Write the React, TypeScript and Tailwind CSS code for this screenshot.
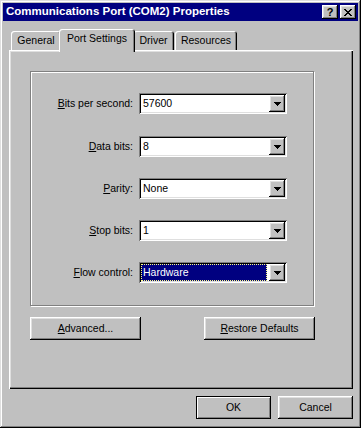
import type { ReactNode } from 'react'

// 콤보 드롭다운 화살표 (픽셀 삼각형)
function Arrow() {
  return (
    <svg width="7" height="4" viewBox="0 0 7 4" shapeRendering="crispEdges">
      <rect x="0" y="0" width="7" height="1" fill="#000" />
      <rect x="1" y="1" width="5" height="1" fill="#000" />
      <rect x="2" y="2" width="3" height="1" fill="#000" />
      <rect x="3" y="3" width="1" height="1" fill="#000" />
    </svg>
  )
}

function CloseGlyph() {
  const rows = ['##....##', '.##..##.', '..####..', '...##...', '..####..', '.##..##.', '##....##']
  return (
    <svg width="8" height="7" viewBox="0 0 8 7" shapeRendering="crispEdges">
      {rows.map((r, y) =>
        r.split('').map((c, x) => (c === '#' ? <rect key={`${x}-${y}`} x={x} y={y} width="1" height="1" fill="#000" /> : null))
      )}
    </svg>
  )
}

const raised =
  'shadow-[inset_-1px_-1px_0_#000,inset_1px_1px_0_#fff,inset_-2px_-2px_0_#808080,inset_2px_2px_0_#dfdfdf]'

function Combo({ value, selected }: { value: string; selected?: boolean }) {
  return (
    <div className="flex h-[21px] w-[148px] items-center bg-white p-[2px] shadow-[inset_1px_1px_0_#808080,inset_-1px_-1px_0_#fff,inset_2px_2px_0_#000,inset_-2px_-2px_0_#dfdfdf]">
      {selected ? (
        <div className="mr-[2px] flex h-[17px] flex-1 items-center border border-dotted border-[#ffff80] bg-[#000080] pl-[1px] text-white">
          {value}
        </div>
      ) : (
        <div className="flex-1 pl-[2px]">{value}</div>
      )}
      <div className={`flex h-[17px] w-[16px] items-center justify-center bg-[#c0c0c0] ${raised}`}>
        <Arrow />
      </div>
    </div>
  )
}

function Row({ label, value, selected, extra }: { label: ReactNode; value: string; selected?: boolean; extra?: string }) {
  return (
    <div className={`flex items-center ${extra ?? ''}`}>
      <div className="w-[102px] text-right">{label}</div>
      <div className="ml-[6px]">
        <Combo value={value} selected={selected} />
      </div>
    </div>
  )
}

function Button({ children, w, isDefault }: { children: ReactNode; w: string; isDefault?: boolean }) {
  return (
    <div
      className={`flex h-[23px] items-center justify-center bg-[#c0c0c0] ${w} ${
        isDefault
          ? 'border border-black shadow-[inset_1px_1px_0_#fff,inset_-1px_-1px_0_#808080]'
          : raised
      }`}
    >
      {children}
    </div>
  )
}

export default function App() {
  return (
    <div className="flex h-[428px] w-[361px] flex-col bg-[#c0c0c0] p-[3px] font-['Liberation_Sans',Arial,sans-serif] text-[10.5px] leading-none text-black shadow-[inset_-1px_-1px_0_#000,inset_1px_1px_0_#dfdfdf,inset_-2px_-2px_0_#808080,inset_2px_2px_0_#fff]">
      {/* 타이틀 바 */}
      <div className="flex h-[18px] items-center justify-between bg-[#000080] pl-[3px] pr-[2px]">
        <span className="text-[11.5px] font-bold text-white">Communications Port (COM2) Properties</span>
        <div className="flex gap-[2px]">
          <div className={`flex h-[14px] w-[16px] items-center justify-center bg-[#c0c0c0] text-[11px] font-bold ${raised}`}>?</div>
          <div className={`flex h-[14px] w-[16px] items-center justify-center bg-[#c0c0c0] ${raised}`}>
            <CloseGlyph />
          </div>
        </div>
      </div>

      <div className="ml-[6px] mr-[5px] flex flex-col">
        {/* 탭 */}
        <div className="mt-[8px] flex h-[21px] items-end pl-[2px]">
          <div className="flex h-[19px] w-[50px] items-center justify-center rounded-t-[3px] shadow-[inset_1px_1px_0_#fff,inset_-1px_0_0_#000,inset_-2px_0_0_#808080]">
            General
          </div>
          <div className="relative z-10 -mx-[2px] -mb-[2px] flex h-[23px] w-[76px] items-start justify-center rounded-t-[3px] bg-[#c0c0c0] pt-[4px] shadow-[inset_1px_1px_0_#fff,inset_-1px_0_0_#000,inset_-2px_0_0_#808080]">
            Port Settings
          </div>
          <div className="flex h-[19px] w-[41px] items-center justify-center rounded-t-[3px] shadow-[inset_1px_1px_0_#fff,inset_-1px_0_0_#000,inset_-2px_0_0_#808080]">
            Driver
          </div>
          <div className="ml-px flex h-[19px] w-[62px] items-center justify-center rounded-t-[3px] shadow-[inset_1px_1px_0_#fff,inset_-1px_0_0_#000,inset_-2px_0_0_#808080]">
            Resources
          </div>
        </div>

        {/* 탭 패널 */}
        <div className="flex h-[339px] flex-col pl-[21px] pt-[21px] shadow-[inset_1px_1px_0_#fff,inset_-1px_-1px_0_#000,inset_-2px_-2px_0_#808080,inset_2px_2px_0_#dfdfdf]">
          <div className="flex h-[235px] w-[284px] flex-col border border-[#808080] pt-[21px] shadow-[inset_1px_1px_0_#fff,1px_1px_0_#fff]">
            <div className="flex flex-col gap-[21px]">
              <Row label={<><u>B</u>its per second:</>} value="57600" extra="mb-px" />
              <Row label={<><u>D</u>ata bits:</>} value="8" />
              <Row label={<><u>P</u>arity:</>} value="None" />
              <Row label={<><u>S</u>top bits:</>} value="1" />
              <Row label={<><u>F</u>low control:</>} value="Hardware" selected />
            </div>
          </div>
          <div className="mt-[11px] flex w-[285px] justify-between">
            <Button w="w-[111px]">
              <span><u>A</u>dvanced...</span>
            </Button>
            <Button w="w-[111px]">
              <span><u>R</u>estore Defaults</span>
            </Button>
          </div>
        </div>

        {/* 하단 버튼 */}
        <div className="mt-[7px] flex justify-end gap-[7px]">
          <Button w="w-[75px]" isDefault>OK</Button>
          <Button w="w-[75px]">Cancel</Button>
        </div>
      </div>
    </div>
  )
}
